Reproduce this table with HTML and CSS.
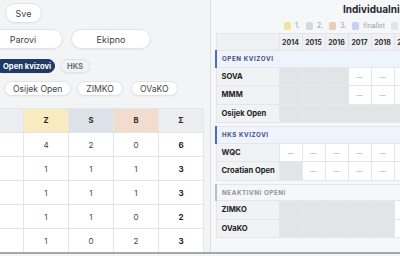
FILE: index.html
```html
<!DOCTYPE html>
<html lang="hr">
<head>
<meta charset="utf-8">
<link rel="stylesheet" href="styles.css">
</head>
<body>
<div class="screen">
  <div class="left">
    <div class="controls">
      <div class="row r1"><span class="pill big sve">Sve</span></div>
      <div class="row r2"><span class="pill big wide">Parovi</span><span class="pill big wide">Ekipno</span></div>
      <div class="row r3"><span class="pill tag active">Open kvizovi</span><span class="pill tag">HKS</span></div>
      <div class="row r4"><span class="pill mid">Osijek Open</span><span class="pill mid">ZIMKO</span><span class="pill mid">OVaKO</span></div>
    </div>
    <table class="stats">
      <thead>
        <tr><th class="name"></th><th class="z">Z</th><th class="s">S</th><th class="b">B</th><th class="sum">Σ</th></tr>
      </thead>
      <tbody>
        <tr><td class="name"></td><td>4</td><td>2</td><td>0</td><td class="tot">6</td></tr>
        <tr><td class="name"></td><td>1</td><td>1</td><td>1</td><td class="tot">3</td></tr>
        <tr><td class="name"></td><td>1</td><td>1</td><td>1</td><td class="tot">3</td></tr>
        <tr><td class="name"></td><td>1</td><td>1</td><td>0</td><td class="tot">2</td></tr>
        <tr><td class="name"></td><td>1</td><td>0</td><td>2</td><td class="tot">3</td></tr>
      </tbody>
    </table>
  </div>
  <div class="right">
    <h2 class="title">Individualni medalje</h2>
    <div class="legend">
      <span class="lg"><i class="sw gold"></i>1.</span>
      <span class="lg"><i class="sw silver"></i>2.</span>
      <span class="lg"><i class="sw bronze"></i>3.</span>
      <span class="lg"><i class="sw final"></i>finalist</span>
      <span class="lg"><i class="sw none"></i>nije održano</span>
    </div>
    <table class="grid">
      <colgroup><col class="lab"><col span="10" class="yr"></colgroup>
      <thead>
        <tr><th></th><th>2014</th><th>2015</th><th>2016</th><th>2017</th><th>2018</th><th>2019</th><th>2020</th><th>2021</th><th>2022</th><th>2023</th></tr>
      </thead>
      <tbody>
        <tr class="sec"><td colspan="11">OPEN KVIZOVI</td></tr>
        <tr><td class="lbl">SOVA</td><td class="na"></td><td class="na"></td><td class="na"></td><td>—</td><td>—</td><td></td><td></td><td></td><td></td><td></td></tr>
        <tr><td class="lbl">MMM</td><td class="na"></td><td class="na"></td><td class="na"></td><td>—</td><td>—</td><td></td><td></td><td></td><td></td><td></td></tr>
        <tr><td class="lbl">Osijek Open</td><td class="na"></td><td class="na"></td><td class="na"></td><td class="na"></td><td class="na"></td><td class="na"></td><td></td><td></td><td></td><td></td></tr>
        <tr class="gap"><td colspan="11"></td></tr>
        <tr class="sec"><td colspan="11">HKS KVIZOVI</td></tr>
        <tr><td class="lbl">WQC</td><td>—</td><td>—</td><td>—</td><td>—</td><td>—</td><td></td><td></td><td></td><td></td><td></td></tr>
        <tr><td class="lbl">Croatian Open</td><td class="na"></td><td>—</td><td>—</td><td>—</td><td>—</td><td></td><td></td><td></td><td></td><td></td></tr>
        <tr class="gap"><td colspan="11"></td></tr>
        <tr class="sec off"><td colspan="11">NEAKTIVNI OPENI</td></tr>
        <tr><td class="lbl">ZIMKO</td><td class="na"></td><td class="na"></td><td class="na"></td><td class="na"></td><td class="na"></td><td></td><td></td><td></td><td></td><td></td></tr>
        <tr><td class="lbl">OVaKO</td><td class="na"></td><td class="na"></td><td class="na"></td><td class="na"></td><td class="na"></td><td></td><td></td><td></td><td></td><td></td></tr>
      </tbody>
    </table>
  </div>
</div>
</body>
</html>
```
FILE: styles.css
```css
* { box-sizing: border-box; }
html, body { margin: 0; padding: 0; }
body {
  width: 400px;
  height: 256px;
  overflow: hidden;
  font-family: Inter, "Liberation Sans", sans-serif;
  background: #f4f5f7;
  color: #222;
}
.screen {
  display: flex;
  height: 254px;
  border-bottom: 2px solid #a4a6aa;
}
.left {
  width: 211px;
  flex: none;
  overflow: hidden;
  background: #f3f4f6;
  border-right: 1px solid #dadde2;
  padding-top: 3px;
}
.controls { display: flex; flex-direction: column; }
.row { display: flex; }
.r1 { padding-left: 5px; }
.r2 { margin-top: 6px; margin-left: -17px; gap: 8px; }
.r3 { margin-top: 10px; margin-left: -5px; gap: 5px; }
.r4 { margin-top: 8px; padding-left: 4px; }
.r4 .pill + .pill { margin-left: 6px; }
.r4 .pill:last-child { margin-left: 8px; }
.pill {
  display: flex;
  align-items: center;
  justify-content: center;
  background: #fff;
  border: 1px solid #dfe2e6;
  border-radius: 999px;
  color: #444;
  white-space: nowrap;
  box-shadow: 0 1px 1px rgba(0,0,0,0.04);
}
.big { height: 20px; font-size: 9px; }
.sve { width: 37px; }
.wide { width: 80px; }
.tag { height: 14px; font-size: 7.6px; font-weight: 700; padding: 0 6px; color: #6b7280; background: #f1f2f4; }
.tag.active { background: #1f3a66; border-color: #1f3a66; color: #fff; padding: 0 3px 0 7px; }
.tag:not(.active) { width: 30px; padding: 0; }
.mid { height: 15px; font-size: 8.6px; padding: 0 8px; }

.stats {
  margin-top: 12px;
  margin-left: -37px;
  border-collapse: collapse;
  table-layout: fixed;
  font-size: 8px;
}
.stats th, .stats td {
  width: 45px;
  height: 24px;
  border: 1px solid #e3e5e9;
  text-align: center;
  padding: 0;
  color: #444;
  background: #fff;
}
.stats th { font-weight: 700; color: #2a2a2a; background: #eceef1; font-size: 7.6px; }
.stats .name { width: 60px; }
.stats th.z { background: #f8ebbf; }
.stats th.s { background: #dde1e8; }
.stats th.b { background: #f2dccd; }
.stats th.sum { background: #eceef1; }
.stats td.tot { font-weight: 700; color: #222; }

.right {
  flex: 1;
  overflow: hidden;
  background: #f6f7f9;
  padding-left: 4px;
}
.title {
  margin: 0;
  height: 18px;
  padding: 2px 0 0 128px;
  font-size: 10px;
  line-height: 14px;
  font-weight: 700;
  color: #1f2633;
  white-space: nowrap;
}
.legend {
  display: flex;
  align-items: center;
  height: 15px;
  padding-left: 69px;
  gap: 6px;
  white-space: nowrap;
  font-size: 7px;
  color: #9aa0a8;
}
.lg { display: flex; align-items: center; gap: 4px; }
.sw { display: block; width: 7px; height: 8px; border-radius: 1.5px; }
.gold { background: #f4e2a1; }
.silver { background: #d6d9df; }
.bronze { background: #ebcdb8; }
.final { background: #c5d1f1; }
.none { background: #e2e3e6; }

.grid {
  border-collapse: collapse;
  table-layout: fixed;
  width: 293px;
  font-size: 6px;
}
.grid col.lab { width: 63px; }
.grid col.yr { width: 23px; }
.grid th {
  height: 17px;
  background: #eef0f3;
  border: 1px solid #e2e5e9;
  font-weight: 700;
  font-size: 7px;
  color: #333;
  padding: 0;
}
.grid td {
  height: 18.5px;
  border: 1px solid #e4e6ea;
  background: #fff;
  text-align: center;
  color: #9ca3af;
  padding: 0;
}
.grid td.lbl {
  text-align: left;
  padding-left: 5px;
  background: #f1f2f4;
  font-size: 7.6px;
  font-weight: 700;
  color: #222;
  white-space: nowrap;
}
.grid td.na { background: #e3e4e7; }
.grid tr.sec td {
  height: 16.5px;
  text-align: left;
  padding-left: 5px;
  background: #eef3fc;
  border-left: 2px solid #4a6bd3;
  font-size: 6.2px;
  font-weight: 700;
  letter-spacing: 0.6px;
  color: #3b4e86;
}
.grid tr.sec.off td {
  background: #f5f6f8;
  border-left-color: #b9bdc6;
  color: #8b9099;
}
.grid tr.gap td {
  height: 4px;
  background: #f6f7f9;
  border-left: none;
  border-right: none;
}
```
